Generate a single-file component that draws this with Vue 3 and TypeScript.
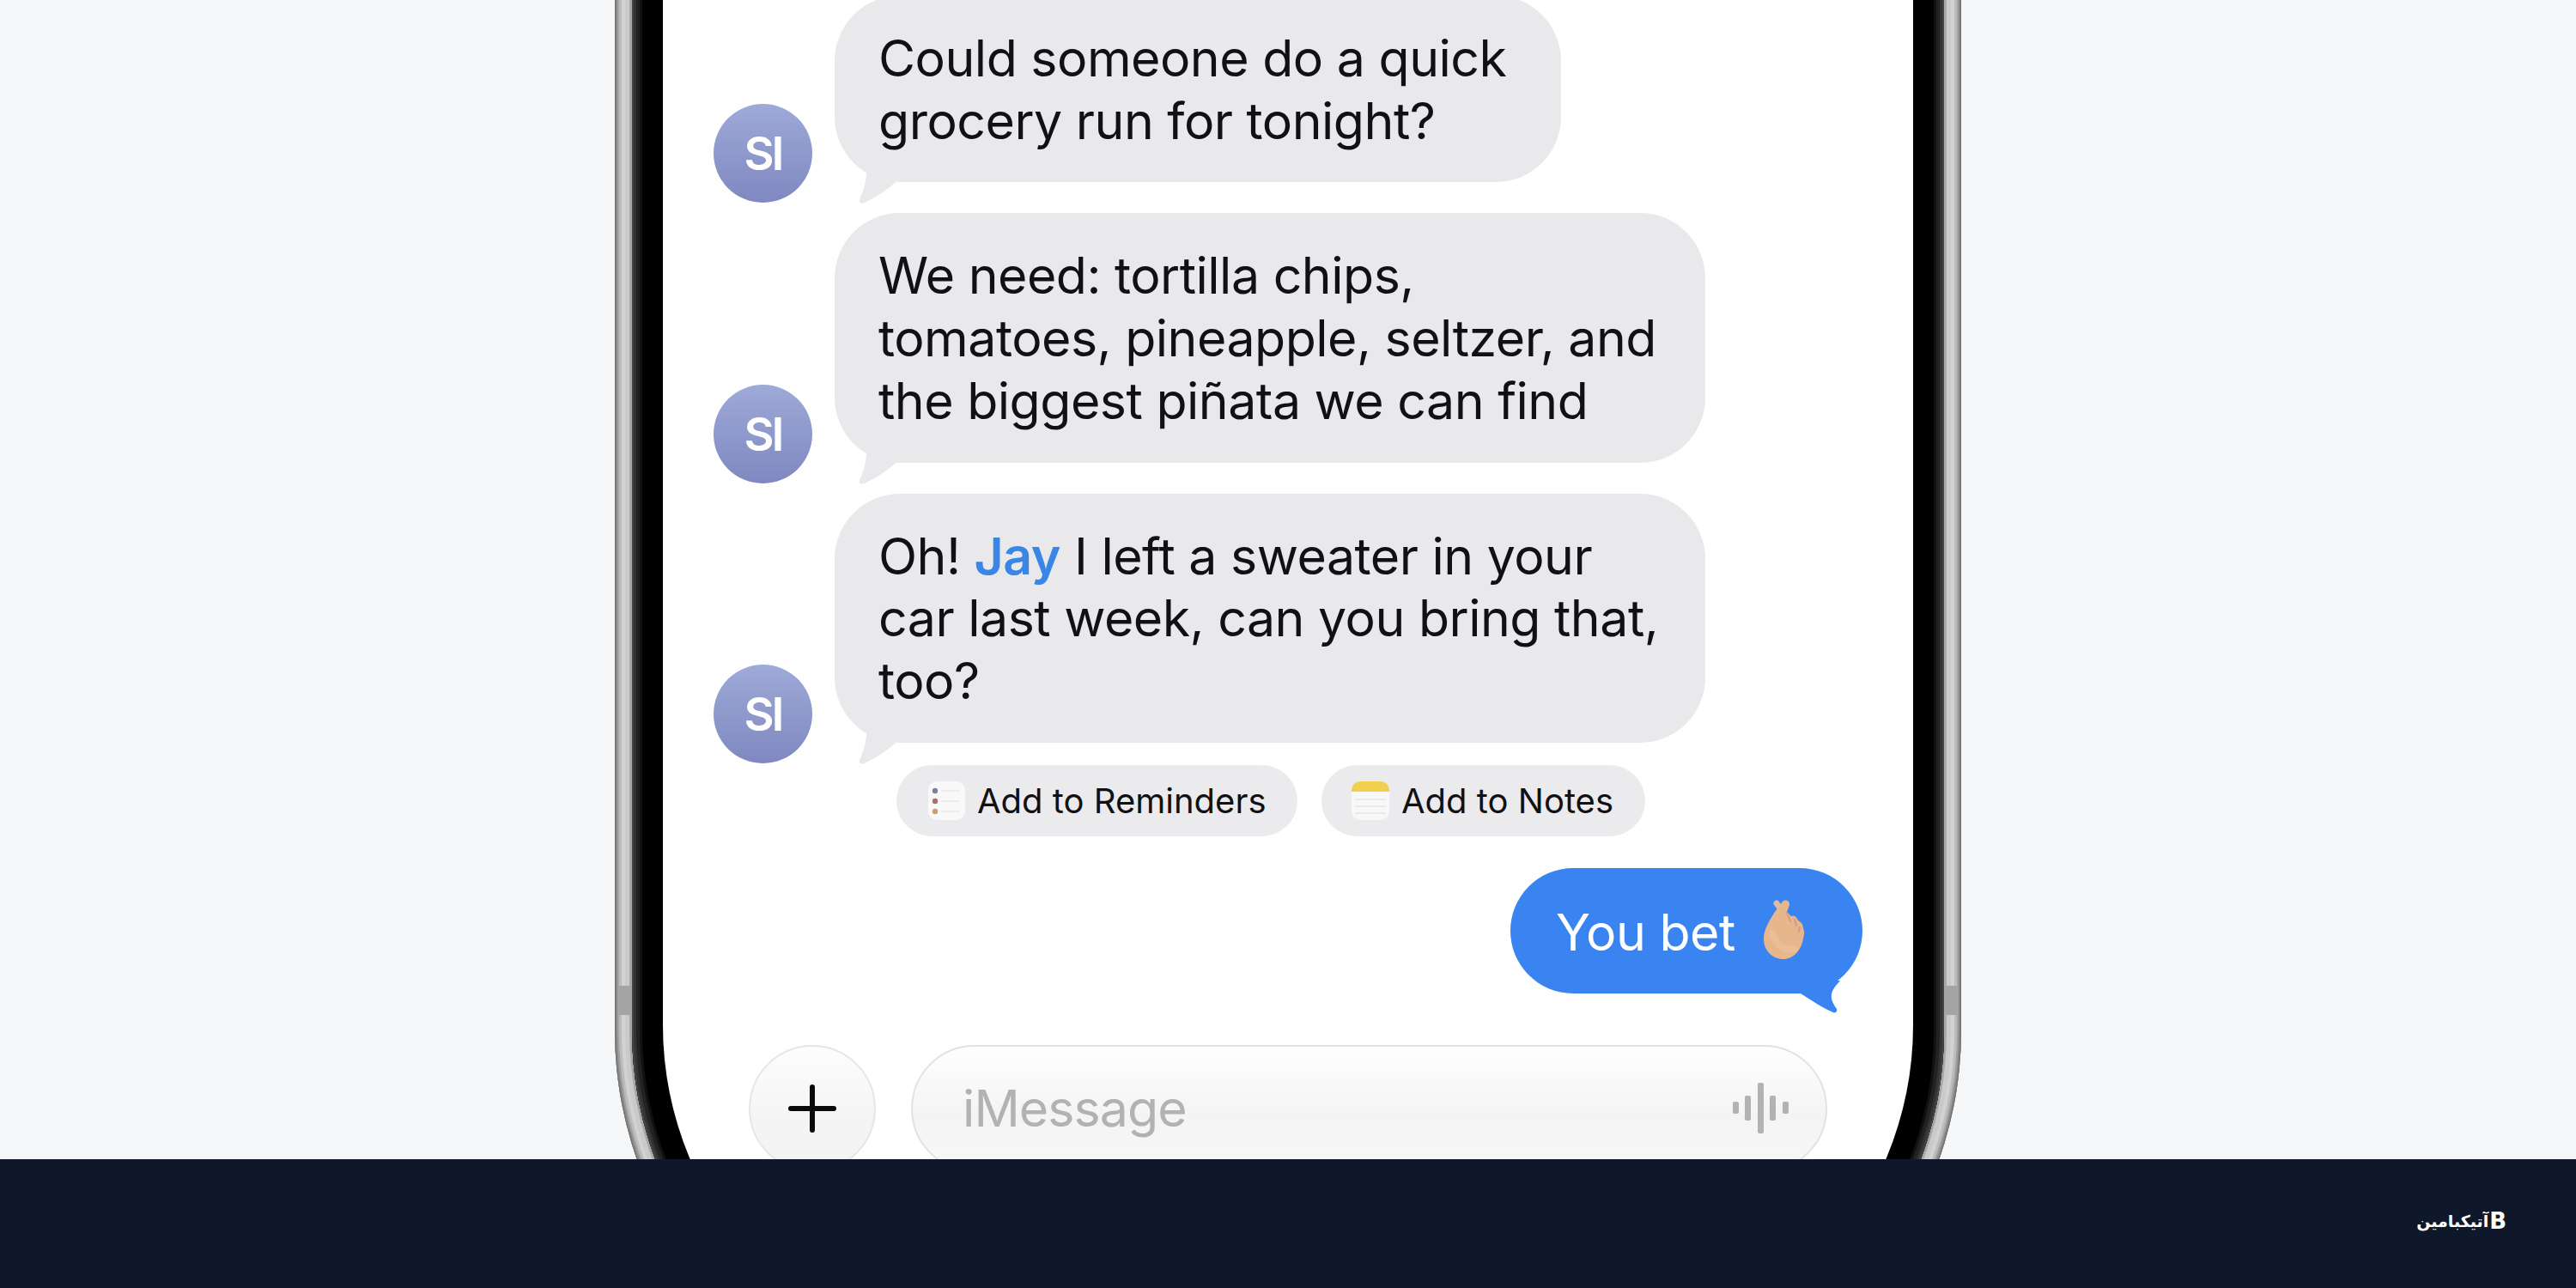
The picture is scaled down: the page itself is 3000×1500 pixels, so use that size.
<script setup lang="ts">
interface Message {
  id: number
  lines: string[]
  wide: boolean
}

const messages: Message[] = [
  { id: 1, lines: ['Could someone do a quick', 'grocery run for tonight?'], wide: false },
  { id: 2, lines: ['We need: tortilla chips,', 'tomatoes, pineapple, seltzer, and', 'the biggest piñata we can find'], wide: true },
]
const bars = [
  { x: 0, y: 22, h: 14 },
  { x: 14, y: 15, h: 29 },
  { x: 29, y: 0, h: 59 },
  { x: 43, y: 15, h: 29 },
  { x: 58, y: 22, h: 14 },
]
</script>

<template>
  <div class="page">
    <main class="stage">
      <section class="phone">
        <span class="band band-left"></span>
        <span class="band band-right"></span>
        <div class="bezel">
          <div class="screen">
            <div v-for="m in messages" :key="m.id" class="row">
              <div class="avatar">SI</div>
              <div class="bubble" :class="{ wide: m.wide }">
                <template v-for="(line, i) in m.lines" :key="i">{{ line }}<br /></template>
                <svg class="tail" viewBox="0 0 60 50" width="60" height="50"><path d="M10 0 C11 14 8 28 2 40 C1 44 4 46 8 44 C24 36 40 26 54 10 L54 0 Z" /></svg>
              </div>
            </div>
            <div class="row">
              <div class="avatar">SI</div>
              <div class="bubble wide">
                Oh! <span class="mention">Jay</span> I left a sweater in your<br />car last week, can you bring that,<br />too?
                <svg class="tail" viewBox="0 0 60 50" width="60" height="50"><path d="M10 0 C11 14 8 28 2 40 C1 44 4 46 8 44 C24 36 40 26 54 10 L54 0 Z" /></svg>
              </div>
            </div>

            <div class="pills">
              <div class="pill pill-reminders">
                <svg class="app-icon" viewBox="0 0 43 45" width="43" height="45">
                  <rect width="43" height="45" rx="10" fill="#f9f9fa" />
                  <circle cx="8" cy="11" r="3.2" fill="#7a8498" />
                  <circle cx="8" cy="23" r="3.2" fill="#a8726f" />
                  <circle cx="8" cy="35" r="3.2" fill="#c4a274" />
                  <path d="M15 11H36M15 23H36M15 35H36" stroke="#ececee" stroke-width="2" />
                </svg>
                <span>Add to Reminders</span>
              </div>
              <div class="pill pill-notes">
                <svg class="app-icon" viewBox="0 0 44 45" width="44" height="45">
                  <rect width="44" height="45" rx="10" fill="#f8f8f8" />
                  <path d="M0 10 A10 10 0 0 1 10 0 H34 A10 10 0 0 1 44 10 V12 H0 Z" fill="#f1d04f" />
                  <path d="M4 21H40M4 29H40M4 37H40" stroke="#ebebed" stroke-width="2" />
                </svg>
                <span>Add to Notes</span>
              </div>
            </div>

            <div class="sent">
              <span class="sent-text">You bet</span>
              <svg class="emoji" viewBox="0 0 50 72" width="50" height="72" role="img" aria-label="hand with index finger and thumb crossed">
                <path d="M15 5 L26 20" stroke="#dfbba6" stroke-width="7" stroke-linecap="round" />
                <path d="M0 46 C0 36 6 26 13 15 L22 3 C25 0 31 2 30 7 L27 15 L32 20 C36 18 39 22 40 25 C44 27 46 30 46 34 C48 38 47 42 46 46 C44 60 34 70 23 70 C10 70 0 60 0 46 Z" fill="#e8b68c" />
                <path d="M27 16 L31 26M36 24 L38 31M42 33 L41 38" stroke="#d69c80" stroke-width="2" stroke-linecap="round" />
                <path d="M10 40 C14 52 24 62 36 58" stroke="#edc6a2" stroke-width="8" fill="none" stroke-linecap="round" opacity="0.5" />
              </svg>
              <svg class="sent-tail" viewBox="0 0 50 50" width="50" height="50"><path d="M0 15 C14 24 26 32 38 37 C41 38 43 36 42 33 C38 27 35 22 36 16 C37 10 41 6 46 0 L0 0 Z" /></svg>
            </div>

            <div class="composer">
              <div class="plus">
                <svg viewBox="0 0 56 56" width="56" height="56"><path d="M3 28H53M28 3V53" stroke="#0a0a0a" stroke-width="6" stroke-linecap="round" /></svg>
              </div>
              <div class="input">
                <span>iMessage</span>
                <svg viewBox="0 0 65 59" width="65" height="59">
                  <rect v-for="b in bars" :key="b.x" :x="b.x" :y="b.y" width="7" :height="b.h" rx="2" fill="#b2b2b3" />
                </svg>
              </div>
            </div>
          </div>
        </div>
      </section>
    </main>
    <footer class="footer">
      <div class="brand"><span class="brand-name">آتیکبامین</span><span class="brand-mark">B</span></div>
    </footer>
  </div>
</template>

<style>
html, body { margin: 0; background: #f5f6f8; }
</style>

<style scoped>
.page {
  width: 3000px;
  height: 1500px;
  overflow: hidden;
  display: flex;
  flex-direction: column;
  font-family: Inter, "Liberation Sans", sans-serif;
  color: #111114;
}
.stage {
  height: 1350px;
  flex: none;
  overflow: hidden;
  display: flex;
  justify-content: center;
  align-items: flex-start;
  background: #f5f6f8;
}
.phone {
  position: relative;
  flex: none;
  width: 1568px;
  height: 1850px;
  margin-top: -200px;
  padding: 20px;
  box-sizing: border-box;
  border-radius: 0 0 450px 450px;
  background: #a8a8a8;
  box-shadow:
    inset 0 0 0 1px #6e6e6e,
    inset 0 0 0 3px #888888,
    inset 0 0 0 5px #a2a2a2,
    inset 0 0 0 8px #bcbcbc,
    inset 0 0 0 12px #d2d2d2,
    inset 0 0 0 17px #cacaca;
}
.band {
  position: absolute;
  top: 1348px;
  width: 16px;
  height: 34px;
  background: #a4a4a4;
}
.band-left { left: 4px; }
.band-right { right: 4px; }
.bezel {
  position: relative;
  height: 100%;
  padding: 36px;
  box-sizing: border-box;
  border-radius: 0 0 430px 430px;
  background: #000;
  box-shadow:
    inset 0 0 0 2px #444,
    inset 0 0 0 5px #333,
    inset 0 0 0 9px #222,
    inset 0 0 0 12px #111;
}
.screen {
  height: 100%;
  box-sizing: border-box;
  padding: 139px 59px 0;
  border-radius: 0 0 400px 400px;
  background: #fff;
  display: flex;
  flex-direction: column;
}
.row {
  display: flex;
  align-items: flex-end;
  gap: 26px;
  margin-bottom: 12px;
}
.avatar {
  flex: none;
  width: 115px;
  height: 115px;
  border-radius: 50%;
  background: linear-gradient(180deg, #9eaad8 0%, #7f88c0 100%);
  color: #fff;
  display: flex;
  align-items: center;
  justify-content: center;
  font-size: 54px;
  font-weight: 600;
  letter-spacing: -3px;
}
.bubble {
  position: relative;
  box-sizing: border-box;
  width: 846px;
  margin-bottom: 24px;
  padding: 37px 0 35px 51px;
  border-radius: 76px;
  background: #e9e9eb;
  font-size: 59px;
  letter-spacing: -0.5px;
  line-height: 72.7px;
  white-space: nowrap;
}
.bubble.wide { width: 1014px; }
.tail {
  position: absolute;
  left: 27px;
  bottom: -30px;
  fill: #e9e9eb;
}
.mention {
  color: #3a86e6;
  font-weight: 600;
}
.pills {
  display: flex;
  gap: 28px;
  margin: -10px 0 0 213px;
}
.pill {
  box-sizing: border-box;
  height: 83px;
  display: flex;
  align-items: center;
  gap: 14px;
  border-radius: 42px;
  background: #ebebed;
  font-size: 40px;
  white-space: nowrap;
}
.pill-reminders { width: 467px; padding-left: 37px; }
.pill-notes { width: 377px; padding-left: 35px; }
.app-icon { flex: none; }
.sent {
  position: relative;
  align-self: flex-end;
  box-sizing: border-box;
  width: 410px;
  height: 146px;
  margin-top: 37px;
  padding-left: 53px;
  display: flex;
  align-items: center;
  gap: 33px;
  border-radius: 73px;
  background: #3a84f1;
  color: #fff;
  font-size: 59px;
  letter-spacing: -0.5px;
  white-space: nowrap;
}
.sent-text { padding-top: 3px; }
.sent-tail {
  position: absolute;
  right: 22px;
  bottom: -35px;
  fill: #3a84f1;
}
.emoji { flex: none; margin-top: -2px; }
.composer {
  display: flex;
  gap: 41px;
  margin: 60px 41px 0;
}
.plus {
  flex: none;
  box-sizing: border-box;
  width: 148px;
  height: 148px;
  border-radius: 50%;
  border: 2px solid #e6e6e7;
  background: linear-gradient(180deg, #fdfdfd 0%, #f4f4f5 60%);
  display: flex;
  align-items: center;
  justify-content: center;
}
.input {
  flex: 1;
  box-sizing: border-box;
  height: 148px;
  padding: 0 43px 0 58px;
  border-radius: 74px;
  border: 2px solid #e2e2e3;
  background: linear-gradient(180deg, #fefefe 0%, #f4f4f5 55%, #f7f7f8 100%);
  display: flex;
  align-items: center;
  justify-content: space-between;
  color: #b2b2b4;
  font-size: 59px;
  letter-spacing: -0.9px;
}
.footer {
  flex: 1;
  background: #0f172a;
  display: flex;
  align-items: flex-start;
  justify-content: flex-end;
  padding: 54px 81px 0 0;
}
.brand {
  display: flex;
  align-items: center;
  color: #fff;
  height: 36px;
  font-family: "DejaVu Sans", sans-serif;
  font-weight: 700;
}
.brand-name { font-size: 19px; direction: rtl; }
.brand-mark { font-size: 26px; margin-left: 1px; }
</style>
